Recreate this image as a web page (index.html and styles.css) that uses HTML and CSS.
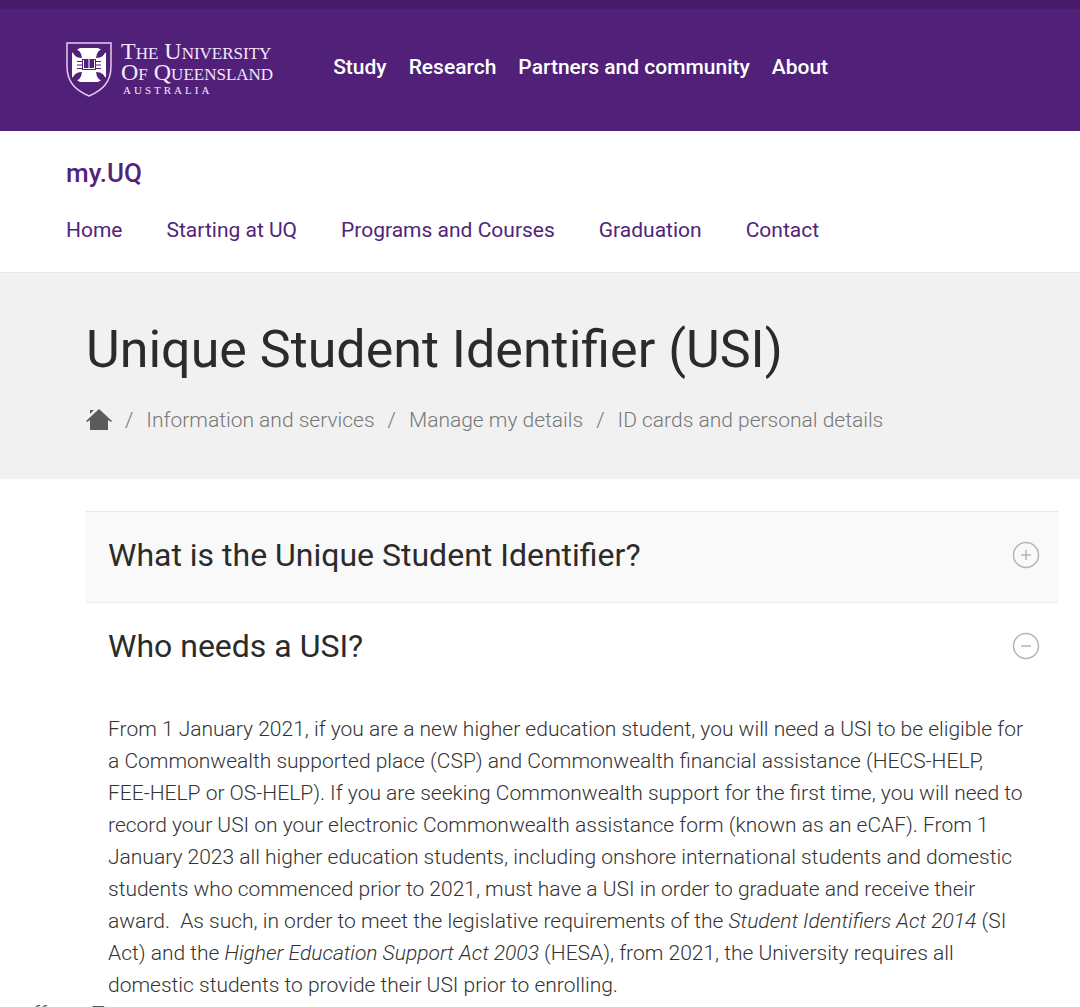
FILE: index.html
```html
<!DOCTYPE html>
<html lang="en">
<head>
<meta charset="utf-8">
<meta name="viewport" content="width=device-width, initial-scale=1">
<title>Unique Student Identifier (USI) - my.UQ</title>
<link rel="stylesheet" href="styles.css">
</head>
<body>
<header class="masthead">
  <a class="logo" href="#" aria-label="The University of Queensland">
    <svg class="crest" viewBox="0 0 46 56" aria-hidden="true">
      <path d="M1 2H45V25C45 41 37 49 23 55C9 49 1 41 1 25Z" fill="none" stroke="#e6c8f2" stroke-width="1.5"/>
      <path d="M6 12L9 10L14 7H32L37 10L40 12V36L37 38L32 41H14L9 38L6 36Z" fill="#fff"/>
      <g fill="#51217a">
        <path d="M6 8Q15 7 16 17Q7 17 6 8ZM40 8Q31 7 30 17Q39 17 40 8ZM6 40Q15 41 16 31Q7 31 6 40ZM40 40Q31 41 30 31Q39 31 40 40Z"/>
        <path d="M16 18H22L23 19L24 18H30V29H16Z"/>
      </g>
      <path d="M11 20.500H16M11 24H16M11 27.500H16M30 20.500H35M30 24H35M30 27.500H35" stroke="#51217a"/>
      <path d="M17 19H18V27H17ZM22.500 19H23.500V28H22.500ZM28 19H29V27H28ZM17 27H29V28H17Z" fill="#fff"/>
    </svg>
    <span class="wordmark">
      <span class="wordmark-name">The University</span>
      <span class="wordmark-name">Of Queensland</span>
      <span class="wordmark-country">AUSTRALIA</span>
    </span>
  </a>
  <nav class="global-nav" aria-label="Global">
    <a href="#">Study</a>
    <a href="#">Research</a>
    <a href="#">Partners and community</a>
    <a href="#">About</a>
  </nav>
</header>
<div class="site-header">
  <a class="site-title" href="#">my.UQ</a>
  <nav class="site-nav" aria-label="Site">
    <a href="#">Home</a>
    <a href="#">Starting at UQ</a>
    <a href="#">Programs and Courses</a>
    <a href="#">Graduation</a>
    <a href="#">Contact</a>
  </nav>
</div>
<section class="hero">
  <h1>Unique Student Identifier (USI)</h1>
  <nav class="breadcrumb" aria-label="Breadcrumb">
    <a class="home" href="#" aria-label="Home"><svg viewBox="0 0 26 22" aria-hidden="true"><path d="M13 0L26 12L25 13L22 11V21H4V11L1 13L0 12L7 5.500L13 0ZM4 1H8L4 5Z" fill="#5b5b5b"/></svg></a>
    <span>/</span>
    <a href="#">Information and services</a>
    <span>/</span>
    <a href="#">Manage my details</a>
    <span>/</span>
    <a href="#">ID cards and personal details</a>
  </nav>
</section>
<main class="content">
  <section class="panel">
    <h2><button class="toggle closed" type="button" aria-expanded="false">What is the Unique Student Identifier?
      <svg viewBox="0 0 28 28" aria-hidden="true"><circle cx="14" cy="14" r="12.5"/><path d="M9 14H19M14 9V19"/></svg></button></h2>
  </section>
  <section class="panel">
    <h2><button class="toggle" type="button" aria-expanded="true">Who needs a USI?
      <svg viewBox="0 0 28 28" aria-hidden="true"><circle cx="14" cy="14" r="12.5"/><path d="M9 14H19"/></svg></button></h2>
    <p>From 1 January 2021, if you are a new higher education student, you will need a USI to be eligible for a Commonwealth supported place (CSP) and Commonwealth financial assistance (HECS-HELP, FEE-HELP or OS-HELP). If you are seeking Commonwealth support for the first time, you will need to record your USI on your electronic Commonwealth assistance form (known as an eCAF). From 1 January 2023 all higher education students, including onshore international students and domestic students who commenced prior to 2021, must have a USI in order to graduate and receive their award.&nbsp; As such, in order to meet the legislative requirements of the <em>Student Identifiers Act 2014</em> (SI Act) and the <em>Higher Education Support Act 2003</em> (HESA), from 2021, the University requires all domestic students to provide their USI prior to enrolling.</p>
  </section>
</main>
<footer class="cutoff"><span>ff</span><span>T</span></footer>
</body>
</html>
```
FILE: styles.css
```css
* { box-sizing: border-box; }
body {
  margin: 0;
  background: #fff;
  color: #2b2b2b;
  font-family: Roboto, "Liberation Sans", sans-serif;
  font-size: 21px;
}
a { color: inherit; text-decoration: none; }
.masthead {
  display: flex;
  align-items: center;
  gap: 60px;
  padding: 32px 66px 34px;
  border-top: 9px solid #481a6b;
  background: #51217a;
  color: #fff;
}
.logo { display: flex; gap: 9px; }
.crest { width: 46px; height: 56px; }
.wordmark {
  display: flex;
  flex-direction: column;
  color: #f8e6fc;
  font-family: "Liberation Serif", serif;
}
.wordmark-name { font-size: 24px; line-height: 21px; font-variant: small-caps; white-space: nowrap; }
.wordmark-country { padding-left: 2px; font-size: 11px; line-height: 14px; letter-spacing: 3px; }
.global-nav { display: flex; gap: 22px; padding-bottom: 4px; font-weight: 500; line-height: 32px; }
.site-header { padding: 24px 66px 26px; border-bottom: 1px solid #e6e6e6; color: #51247a; }
.site-title { display: block; font-size: 26px; font-weight: 500; line-height: 36px; }
.site-nav { display: flex; gap: 44px; margin-top: 23px; line-height: 32px; }
.hero { padding: 45px 86px 43px; background: #f1f1f1; }
h1 { margin: 0; font-size: 52px; font-weight: 400; line-height: 64px; }
.breadcrumb {
  display: flex;
  align-items: center;
  gap: 13px;
  margin-top: 22px;
  color: #777;
  font-weight: 300;
  line-height: 32px;
}
.home { display: flex; }
.home svg { width: 26px; height: 22px; }
.content { padding: 32px 22px 0 86px; }
h2 { margin: 0; font-size: inherit; }
.toggle {
  display: flex;
  align-items: center;
  justify-content: space-between;
  width: 100%;
  padding: 23px 18px 27px 22px;
  border: 0;
  background: none;
  color: #2b2b2b;
  font: 400 32px/40px Roboto, "Liberation Sans", sans-serif;
  text-align: left;
}
.toggle.closed { border-top: 1px solid #e8e8e8; border-bottom: 1px solid #ececec; background: #f9f9f9; }
.toggle svg { width: 28px; height: 28px; fill: none; stroke: #b4b4b4; stroke-width: 1.5; }
p { margin: 0; padding: 20px 30px 2px 22px; color: #333; font-weight: 300; line-height: 32px; }
.cutoff {
  display: flex;
  gap: 45px;
  height: 4px;
  padding-left: 33px;
  overflow: hidden;
  color: #555;
  font-weight: 300;
  line-height: 22px;
}
```
